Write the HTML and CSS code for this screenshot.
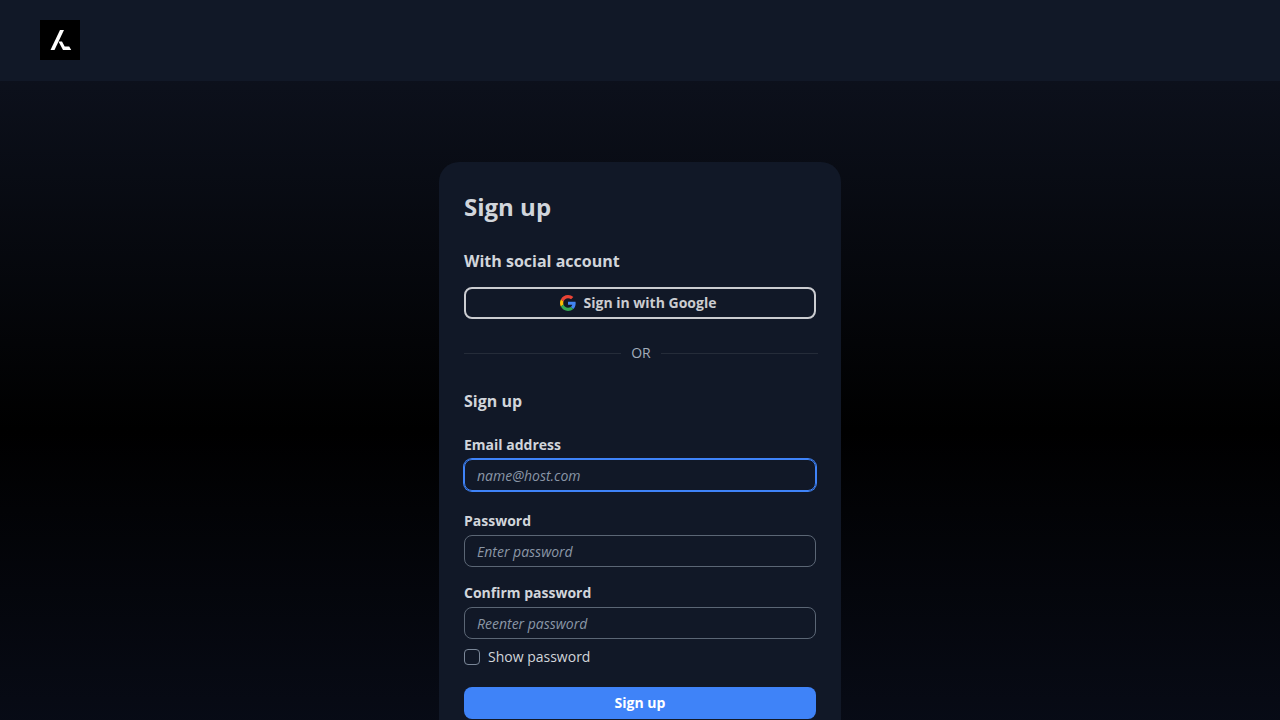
FILE: index.html
```html
<!DOCTYPE html>
<html lang="en">
<head>
    <meta charset="UTF-8">
    <meta name="viewport" content="width=device-width, initial-scale=1.0">
    <title>Sign up</title>
    <link rel="stylesheet" href="styles.css">
</head>
<body>
    <header class="header">
        <a class="logo" href="#" aria-label="Home">
            <svg viewBox="0 0 40 40" width="40" height="40">
                <rect width="40" height="40" fill="#000"/>
                <path d="M20 10h4l-9.500 20h-4z" fill="#fff"/>
                <path d="M18.500 21.500h3.500l2.700 5h4.500l2 3.500h-8.200z" fill="#fff"/>
            </svg>
        </a>
    </header>
    <main class="main">
        <div class="card">
            <h1>Sign up</h1>
            <h2>With social account</h2>
            <button type="button" class="google-btn">
                <svg viewBox="0 0 48 48" width="16" height="16">
                    <path fill="#EA4335" d="M24 9.500c3.540 0 6.710 1.220 9.210 3.600l6.850-6.850C35.900 2.380 30.470 0 24 0 14.620 0 6.510 5.380 2.560 13.220l7.980 6.190C12.430 13.720 17.740 9.500 24 9.500z"/>
                    <path fill="#4285F4" d="M46.980 24.550c0-1.570-.15-3.090-.38-4.550H24v9.020h12.940c-.58 2.960-2.260 5.480-4.780 7.180l7.730 6c4.510-4.180 7.090-10.360 7.090-17.650z"/>
                    <path fill="#FBBC05" d="M10.530 28.590c-.48-1.450-.76-2.990-.76-4.590s.27-3.140.76-4.590l-7.980-6.190C.92 16.460 0 20.120 0 24c0 3.880.92 7.540 2.560 10.780l7.970-6.190z"/>
                    <path fill="#34A853" d="M24 48c6.480 0 11.930-2.130 15.890-5.810l-7.730-6c-2.150 1.450-4.920 2.300-8.160 2.300-6.260 0-11.570-4.220-13.470-9.910l-7.980 6.190C6.510 42.620 14.620 48 24 48z"/>
                </svg>
                Sign in with Google
            </button>
            <div class="divider">OR</div>
            <form class="form">
                <h2>Sign up</h2>
                <div class="field email-field">
                    <label for="email">Email address</label>
                    <input type="email" id="email" placeholder="name@host.com" autofocus>
                </div>
                <div class="field">
                    <label for="password">Password</label>
                    <input type="password" id="password" placeholder="Enter password">
                </div>
                <div class="field">
                    <label for="confirm">Confirm password</label>
                    <input type="password" id="confirm" placeholder="Reenter password">
                </div>
                <label class="show-password">
                    <input type="checkbox">
                    Show password
                </label>
                <button type="submit" class="submit-btn">Sign up</button>
            </form>
        </div>
    </main>
</body>
</html>
```

FILE: styles.css
```css
* {
    box-sizing: border-box;
}

body {
    margin: 0;
    font-family: "Open Sans", "Noto Sans", sans-serif;
    font-size: 14px;
    line-height: 20px;
    color: #d1d5db;
    background: linear-gradient(to bottom, #0f1422, #000, #0b1020);
}

.header {
    padding: 20px 40px;
    background-color: #111827;
    border-bottom: 1px solid #111827;
}

.logo, .logo svg {
    display: block;
    width: 40px;
}

.main {
    display: flex;
    justify-content: center;
    padding: 81px 16px;
}

.card {
    width: 100%;
    max-width: 402px;
    padding: 28px 25px 60px;
    border-radius: 20px;
    background-color: #111827;
}

h1 {
    margin: 0 0 25px;
    font-size: 24px;
    line-height: 34px;
    font-weight: 700;
}

h2 {
    margin: 0 0 14px;
    font-size: 16px;
    line-height: 24px;
    font-weight: 700;
}

button {
    display: flex;
    align-items: center;
    justify-content: center;
    gap: 8px;
    width: 100%;
    height: 32px;
    border: none;
    border-radius: 8px;
    font: inherit;
    font-weight: 700;
    cursor: pointer;
}

.google-btn {
    padding: 0 8px 0 4px;
    background: transparent;
    border: 2px solid #cbccd0;
    color: #cbccd0;
}

.divider {
    display: flex;
    align-items: center;
    gap: 10px;
    margin: 24px -2px 26px 0;
    color: #a3adbb;
}

.divider::before, .divider::after {
    content: "";
    flex: 1;
    height: 1px;
    background-color: #252c39;
}

.field {
    margin-bottom: 16px;
}

.field label {
    display: block;
    margin-bottom: 4px;
    font-weight: 700;
}

.field input {
    display: block;
    width: 100%;
    height: 32px;
    padding: 0 12px;
    border: 1px solid #5b6675;
    border-radius: 8px;
    background: transparent;
    color: #d1d5db;
    font: inherit;
}

.field input::placeholder {
    color: #8a96a6;
    font-style: italic;
}

.field input:focus {
    outline: none;
    border-color: #3f83f8;
    box-shadow: 0 0 0 1px #3f83f8;
}

.form h2 {
    margin-bottom: 22px;
}

.email-field {
    margin-bottom: 20px;
}

.show-password {
    display: flex;
    align-items: center;
    gap: 8px;
    margin: -8px 0 20px;
}

.show-password input {
    appearance: none;
    width: 16px;
    height: 16px;
    margin: 0;
    border: 1px solid #7b8798;
    border-radius: 4px;
}

.submit-btn {
    background-color: #3f83f8;
    color: #fff;
}
```
